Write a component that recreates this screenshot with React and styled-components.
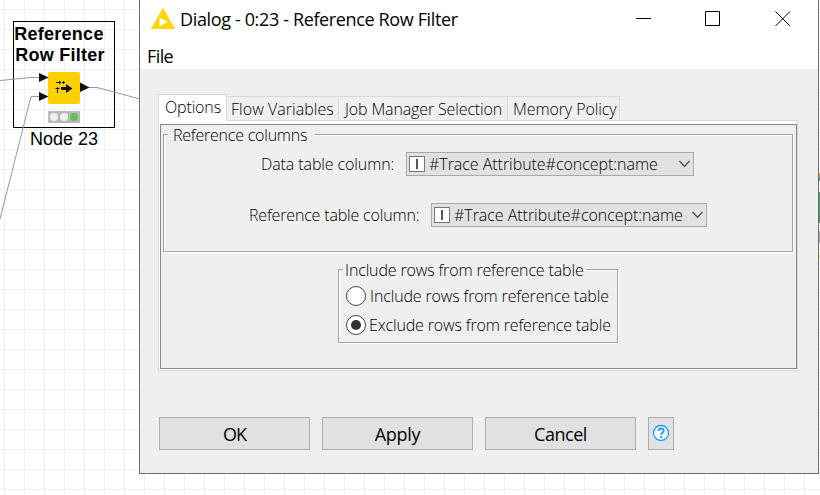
import React from 'react';
import styled, { createGlobalStyle, css } from 'styled-components';

const Global = createGlobalStyle`
  * { box-sizing: border-box; }
  body { margin: 0; overflow: hidden; }
`;

const Canvas = styled.main`
  position: relative;
  width: 820px;
  height: 495px;
  overflow: hidden;
  background-color: #fff;
  background-image:
    linear-gradient(to right, #efefef 1px, transparent 1px),
    linear-gradient(to bottom, #efefef 1px, transparent 1px);
  background-size: 20px 20px;
  background-position: 4px 9px;
`;

const Wires = styled.svg`
  position: absolute;
  inset: 0;
`;

const Node = styled.section`
  position: absolute;
  left: 13px;
  top: 21px;
  width: 102px;
  display: flex;
  flex-direction: column;
  align-items: center;
  font: 18px/21px 'Liberation Sans', Arial, sans-serif;
  color: #000;
`;

const NodeFrame = styled.div`
  width: 102px;
  height: 107px;
  border: 1px solid #000;
  display: flex;
  flex-direction: column;
  align-items: center;
  padding-top: 2px;
`;

const NodeName = styled.div`
  font-weight: bold;
  letter-spacing: 0.25px;
  white-space: nowrap;
  margin-left: ${p => p.$shift || 0}px;
`;

const NodeTile = styled.div`
  width: 32px;
  height: 32px;
  margin: 6px 0 7px;
  border-radius: 2px;
  background: #ffd000;
`;

const Lights = styled.div`
  display: flex;
  align-items: center;
  justify-content: space-around;
  width: 32px;
  height: 12px;
  padding: 0 1px;
  border-radius: 1px;
  background: #b9b9b9;
`;

const Light = styled.span`
  width: 8px;
  height: 8px;
  border-radius: 50%;
  background: ${p => (p.$on ? '#68bf5c' : '#efefef')};
`;

const NodeId = styled.div`
  margin-top: 1px;
`;

const EdgeMark = styled.i`
  position: absolute;
  left: 819px;
  top: ${p => p.$top}px;
  width: 1px;
  height: ${p => p.$h}px;
  background: ${p => p.$color};
`;

const Window = styled.section`
  position: absolute;
  left: 139px;
  top: -1px;
  width: 680px;
  height: 475px;
  display: flex;
  flex-direction: column;
  border: 1px solid #6b6b6b;
  background: #efefef;
  color: #000;
`;

const uiFont = css`
  font-family: 'Open Sans', 'Noto Sans', sans-serif;
  white-space: nowrap;
`;

const Caption = styled.span`
  ${uiFont}
  font-size: 18px;
  line-height: 24px;
  font-weight: 400;
  letter-spacing: ${p => p.$track || 0}px;
`;

const Text = styled.span`
  ${uiFont}
  font-size: 16px;
  line-height: 20px;
  font-weight: 300;
  letter-spacing: ${p => p.$track || 0}px;
`;

const TitleBar = styled.header`
  display: flex;
  align-items: flex-start;
  height: 44px;
  padding: 7px 27px 0 10px;
  background: #fff;
`;

const TitleIcon = styled.svg`
  margin: 0 4px 0 0;
`;

const WindowControls = styled.div`
  display: flex;
  gap: 54px;
  margin: 3px 0 0 auto;

  svg:last-child {
    margin-left: 1px;
  }
`;

const MenuBar = styled.nav`
  height: 25px;
  padding-left: 7px;
  background: #fff;
`;

const Content = styled.div`
  flex: 1;
  padding: 25px 21px 0 18px;
`;

const Tabs = styled.div`
  display: flex;
  align-items: flex-end;
  height: 27px;
  position: relative;
  margin-bottom: -1px;
`;

const Tab = styled.div`
  display: flex;
  align-items: flex-start;
  width: ${p => p.$w}px;
  height: 25px;
  padding: 2px 0 0 ${p => p.$pad}px;
  border: 1px solid #d9d9d9;
  border-left: 0;
  background: #f0f0f0;
  ${p =>
    p.$active &&
    css`
      height: 27px;
      border-left: 1px solid #d9d9d9;
      border-bottom-color: #fff;
      background: #fff;
    `}
`;

const TabPage = styled.div`
  width: 640px;
  height: 251px;
  padding: 3px 0 1px 1px;
  border: 1px solid #d9d9d9;
  background: #fff;
`;

const Pane = styled.div`
  height: 245px;
  padding: 9px 0 0 2px;
  border: 1px solid #828790;
  background: #efefef;
  display: flex;
  flex-direction: column;
  align-items: flex-start;
`;

const Group = styled.div`
  width: ${p => p.$w}px;
  height: ${p => p.$h}px;
  margin: ${p => p.$margin || '0'};
  border: 1px solid #a0a0a0;
  box-shadow: 1px 1px 0 #fff, inset 1px 1px 0 #fff;
`;

const Legend = styled.div`
  width: ${p => p.$w}px;
  height: 20px;
  display: flex;
  margin: -10px 0 0 4px;
  padding-left: ${p => p.$pad}px;
  background: #efefef;
`;

const Field = styled.div`
  display: flex;
  align-items: center;
  height: 24px;
  margin: ${p => p.$margin};
`;

const Combo = styled.div`
  display: flex;
  align-items: center;
  width: ${p => p.$w}px;
  height: 24px;
  margin-left: auto;
  padding: 0 2px 0 2px;
  border: 1px solid #a9a9ad;
  background: #e1e1e1;
`;

const TypeIcon = styled.span`
  display: flex;
  align-items: center;
  justify-content: center;
  width: 16px;
  height: 16px;
  margin-right: 4px;
  border: 1px solid #777;
  background: #fff;

  &::before {
    content: '';
    width: 2px;
    height: 10px;
    background: #555;
  }
`;

const Chevron = styled.svg`
  margin-left: auto;
`;

const RadioRow = styled.label`
  display: flex;
  align-items: center;
  height: 21px;
  margin: ${p => p.$margin};
`;

const Radio = styled.span`
  display: flex;
  align-items: center;
  justify-content: center;
  width: 20px;
  height: 20px;
  margin-right: ${p => p.$gap}px;
  border: 1px solid #444;
  border-radius: 50%;
  background: #fff;

  &::before {
    content: '';
    width: 10px;
    height: 10px;
    border-radius: 50%;
    background: ${p => (p.$checked ? '#333' : 'transparent')};
  }
`;

const Actions = styled.footer`
  display: flex;
  gap: 12px;
  padding: 46px 0 0 1px;
`;

const Button = styled.button`
  display: flex;
  align-items: center;
  justify-content: center;
  width: ${p => p.$w || 151}px;
  height: 33px;
  padding: 0;
  border: 1px solid #adadad;
  border-radius: 0;
  background: #e1e1e1;
  color: #000;
`;

const HelpIcon = styled.svg`
  margin-top: -1px;
`;

const Column = ({ label, track, margin, w }) => (
  <Field $margin={margin}>
    <Text $track={track}>{label}</Text>
    <Combo $w={w}>
      <TypeIcon />
      <Text $track={-0.04}>#Trace Attribute#concept:name</Text>
      <Chevron width="13" height="8" viewBox="0 0 13 8" fill="none" stroke="#444" strokeWidth="1.2">
        <path d="M1.500 1l5 5.300L11.500 1" />
      </Chevron>
    </Combo>
  </Field>
);

export default function App() {
  return (
    <Canvas>
      <Global />
      <Node>
        <NodeFrame>
          <NodeName $shift={-10}>Reference</NodeName>
          <NodeName $shift={-8}>Row Filter</NodeName>
          <NodeTile />
          <Lights>
            <Light />
            <Light />
            <Light $on />
          </Lights>
        </NodeFrame>
        <NodeId>Node 23</NodeId>
      </Node>
      <Wires width="140" height="230" fill="none">
        <g stroke="#999">
          <path d="M0 80.500L31 77.500H40M0 219L31 96.500H40M88 87.500H97L140 99" />
        </g>
        <path fill="#111" d="M39 73l9.500 4.500L39 82zM39 92l9.500 4.500L39 101zM80 82.500l9.500 5L80 92z" />
        <g stroke="#111" strokeWidth="1">
          <path d="M56 82.500h5M62 82.500h3M57.500 87v6M63.500 81v3M55.500 88.500h4" />
          <path d="M61 88.500h7" strokeWidth="3" />
        </g>
        <path fill="#111" d="M59 80.500l2.500 2-2.500 2zM66 84l6.500 4.500L66 93z" />
      </Wires>

      <EdgeMark $top={173} $h={4} $color="#e0a040" />
      <EdgeMark $top={177} $h={4} $color="#3e9bb0" />
      <EdgeMark $top={192} $h={31} $color="#35a060" />
      <EdgeMark $top={231} $h={12} $color="#b0b0b0" />
      <EdgeMark $top={255} $h={3} $color="#e4e45a" />

      <Window>
        <TitleBar>
          <TitleIcon width="26" height="24" viewBox="0 0 26 24">
            <path d="M13 0.500L25 22H1z" fill="#ffd60a" />
            <path d="M9.500 10.500v9l8-4.500z" fill="#fff" />
          </TitleIcon>
          <Caption $track={-0.36}>Dialog - 0:23 - Reference Row Filter</Caption>
          <WindowControls>
            <svg width="15" height="16" stroke="#000" fill="none"><path d="M0 8.500h15" /></svg>
            <svg width="15" height="16" stroke="#000" fill="none"><path d="M.5 1.500h14v14H.5z" /></svg>
            <svg width="16" height="16" stroke="#000" fill="none"><path d="M.5 1.500l14.500 14.500M15 1.500L.5 16" /></svg>
          </WindowControls>
        </TitleBar>
        <MenuBar>
          <Caption $track={-0.6}>File</Caption>
        </MenuBar>
        <Content>
          <Tabs>
            <Tab $w={69} $pad={6} $active><Text $track={-0.15}>Options</Text></Tab>
            <Tab $w={112} $pad={4}><Text $track={0.05}>Flow Variables</Text></Tab>
            <Tab $w={169} $pad={6}><Text $track={-0.14}>Job Manager Selection</Text></Tab>
            <Tab $w={112} $pad={5}><Text $track={-0.1}>Memory Policy</Text></Tab>
          </Tabs>
          <TabPage>
            <Pane>
              <Group $w={630} $h={118}>
                <Legend $w={147} $pad={5}><Text $track={-0.22}>Reference columns</Text></Legend>
                <Column label="Data table column:" track={-0.1} margin="7px 98px 0 97px" w={288} />
                <Column label="Reference table column:" track={-0.17} margin="27px 85px 0 85px" w={276} />
              </Group>
              <Group $w={280} $h={74} $margin="17px 0 0 175px">
                <Legend $w={243} $pad={2}><Text $track={-0.15}>Include rows from reference table</Text></Legend>
                <RadioRow $margin="5px 0 0 7px">
                  <Radio $gap={4} />
                  <Text $track={-0.14}>Include rows from reference table</Text>
                </RadioRow>
                <RadioRow $margin="8px 0 0 7px">
                  <Radio $gap={3} $checked />
                  <Text $track={-0.15}>Exclude rows from reference table</Text>
                </RadioRow>
              </Group>
            </Pane>
          </TabPage>
          <Actions>
            <Button><Caption $track={-0.9}>OK</Caption></Button>
            <Button><Caption $track={-0.25}>Apply</Caption></Button>
            <Button><Caption $track={-0.45}>Cancel</Caption></Button>
            <Button $w={26} aria-label="Help">
              <HelpIcon width="18" height="18" viewBox="0 0 18 18" fill="none" stroke="#1e9bf5">
                <circle cx="9" cy="9" r="7.500" fill="#fff" strokeWidth="1.300" />
                <path d="M6.500 7c0-3.200 5.200-3.200 5.200-.3 0 1.800-2.500 1.700-2.500 4M9.200 12v2" strokeWidth="2" />
              </HelpIcon>
            </Button>
          </Actions>
        </Content>
      </Window>
    </Canvas>
  );
}
